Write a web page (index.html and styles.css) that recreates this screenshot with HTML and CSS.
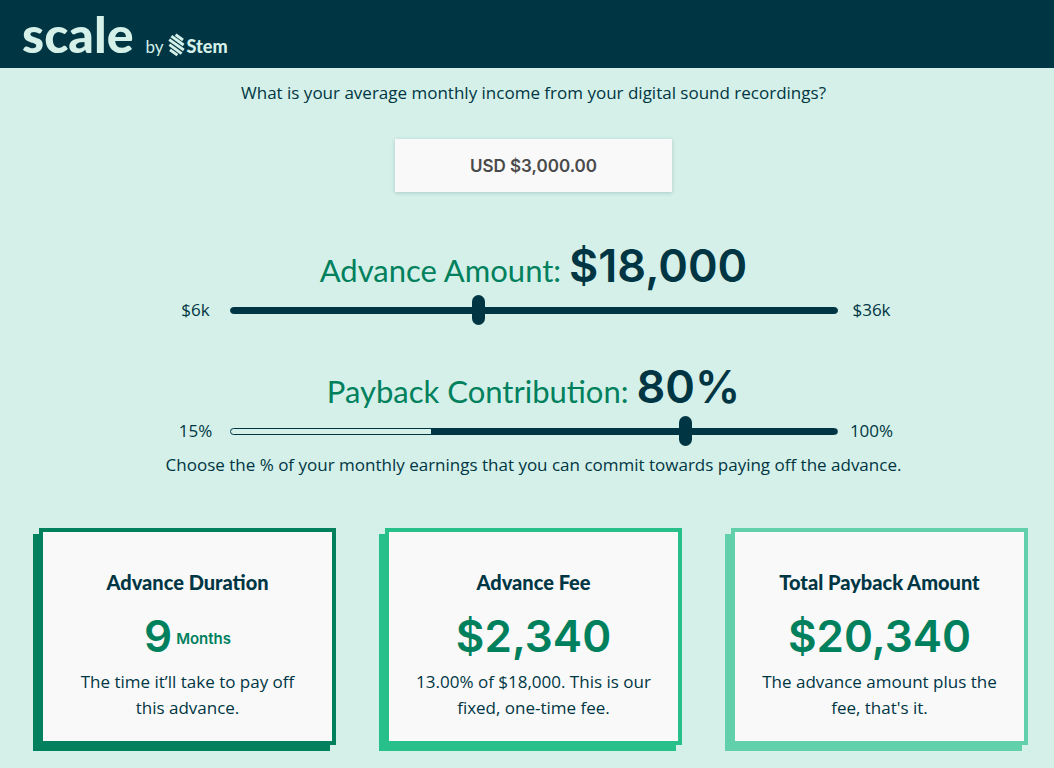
FILE: index.html
```html
<!DOCTYPE html>
<html lang="en">
<head>
<meta charset="utf-8">
<meta name="viewport" content="width=device-width, initial-scale=1">
<title>Scale by Stem</title>
<link rel="stylesheet" href="styles.css">
</head>
<body>
<header class="topbar">
  <span class="brand">scale</span>
  <span class="brand-by">by</span>
  <span class="stem">
    <svg class="stem-mark" viewBox="0 0 17 24" aria-hidden="true">
      <g fill="none" stroke="currentColor" stroke-width="2.8">
        <path d="M7.6 1.6 15 7"/>
        <path d="M3.4 3.2 15.6 12"/>
        <path d="M1.2 6.6 15.8 17"/>
        <path d="M1.4 11.6 13.6 20.6"/>
        <path d="M2 16.8 9.4 22.2"/>
      </g>
    </svg>
    <span class="stem-name">Stem</span>
  </span>
</header>
<main class="content">
  <form class="calculator">
    <label class="question" for="income">What is your average monthly income from your digital sound recordings?</label>
    <input class="income" id="income" type="text" value="USD $3,000.00">

    <div class="field">
      <label class="field-title" for="advance">Advance Amount: <output class="field-value" for="advance">$18,000</output></label>
      <div class="range-row">
        <span class="bound">$6k</span>
        <div class="slider">
          <div class="rail"></div>
          <input class="range" id="advance" type="range" min="6000" max="36000" step="1000" value="18000">
        </div>
        <span class="bound">$36k</span>
      </div>
    </div>

    <div class="field">
      <label class="field-title" for="payback">Payback Contribution: <output class="field-value" for="payback">80%</output></label>
      <div class="range-row">
        <span class="bound">15%</span>
        <div class="slider">
          <div class="rail rail-partial"></div>
          <input class="range" id="payback" type="range" min="15" max="100" value="80">
        </div>
        <span class="bound">100%</span>
      </div>
      <p class="hint">Choose the % of your monthly earnings that you can commit towards paying off the advance.</p>
    </div>
  </form>

  <section class="cards">
    <article class="card card-duration">
      <h2 class="card-title">Advance Duration</h2>
      <p class="card-value">9 <span class="unit">Months</span></p>
      <p class="card-text">The time it’ll take to pay off this advance.</p>
    </article>
    <article class="card card-fee">
      <h2 class="card-title">Advance Fee</h2>
      <p class="card-value">$2,340</p>
      <p class="card-text">13.00% of $18,000. This is our fixed, one-time fee.</p>
    </article>
    <article class="card card-total">
      <h2 class="card-title">Total Payback Amount</h2>
      <p class="card-value">$20,340</p>
      <p class="card-text">The advance amount plus the fee, that's it.</p>
    </article>
  </section>
</main>
</body>
</html>
```
FILE: styles.css
```css
:root {
  --navy: #003644;
  --mint: #d4f0e8;
  --green: #00805d;
  --paper: #f9f9f9;
}

* { box-sizing: border-box; }

body {
  margin: 0;
  background: var(--mint);
  color: var(--navy);
  font: 17px/26px "Open Sans", sans-serif;
}

.topbar {
  display: flex;
  align-items: baseline;
  height: 68px;
  padding: 6px 22px 0;
  background: var(--navy);
  color: var(--mint);
  font-family: Lato, sans-serif;
}

.brand {
  font-size: 50px;
  font-weight: 900;
  line-height: 56px;
}

.brand-by {
  margin-left: 12px;
  font-size: 17px;
}

.stem {
  display: flex;
  align-items: baseline;
  margin-left: 4px;
}

.stem-mark {
  align-self: flex-start;
  width: 17px;
  height: 24px;
}

.stem-name {
  margin-left: 2px;
  font-size: 18px;
  font-weight: 900;
}

.content { padding: 12px 26px 16px 39px; }

.calculator {
  display: flex;
  flex-direction: column;
  align-items: center;
}

.income {
  width: 277px;
  height: 53px;
  margin: 33px 0 49px;
  border: 0;
  background: var(--paper);
  box-shadow: 0 1px 4px rgb(0 54 68 / 20%);
  color: #4a4a4a;
  font: 600 17px/24px Inter, sans-serif;
  text-align: center;
}

.field {
  display: flex;
  flex-direction: column;
  align-items: center;
  width: 100%;
  max-width: 744px;
  margin-bottom: 37px;
}

.field-title {
  color: var(--green);
  font: 31px/50px Lato, sans-serif;
}

.field-value {
  color: var(--navy);
  font: 600 45px/50px Inter, sans-serif;
}

.range-row {
  display: grid;
  grid-template-columns: 68px 1fr 68px;
  align-items: center;
  width: 100%;
  height: 30px;
}

.bound { text-align: center; }

.slider {
  display: grid;
  align-items: center;
}

.rail,
.range { grid-area: 1 / 1; }

.rail {
  height: 7px;
  border: 1px solid var(--navy);
  border-radius: 4px;
  background: var(--navy);
}

.rail-partial { background: linear-gradient(to right, var(--mint) 33%, var(--navy) 33%); }

.range {
  appearance: none;
  height: 30px;
  margin: 0 12px 0 16px;
  background: transparent;
}

.range::-webkit-slider-thumb {
  appearance: none;
  width: 13px;
  height: 30px;
  border-radius: 7px;
  background: var(--navy);
}

.hint {
  margin: 6px 0 0;
  text-align: center;
}

.cards {
  display: grid;
  grid-template-columns: repeat(3, 1fr);
  gap: 49px;
  margin-top: 13px;
}

.card {
  padding: 36px 24px 20px;
  border: 4px solid var(--accent);
  background: var(--paper);
  box-shadow: -6px 6px 0 var(--accent);
  text-align: center;
}

.card-duration { --accent: #00805d; }
.card-fee { --accent: #27bf8a; }
.card-total { --accent: #63d0ac; }

.card-title {
  margin: 0;
  font: 900 20px/28px Lato, sans-serif;
}

.card-value {
  display: flex;
  align-items: center;
  justify-content: center;
  gap: 4px;
  margin: 14px 0 6px;
  color: var(--green);
  font: 600 44px/53px Inter, sans-serif;
}

.unit {
  padding-top: 4px;
  font-size: 15px;
  line-height: 20px;
}

.card-text { margin: 0; }
```
